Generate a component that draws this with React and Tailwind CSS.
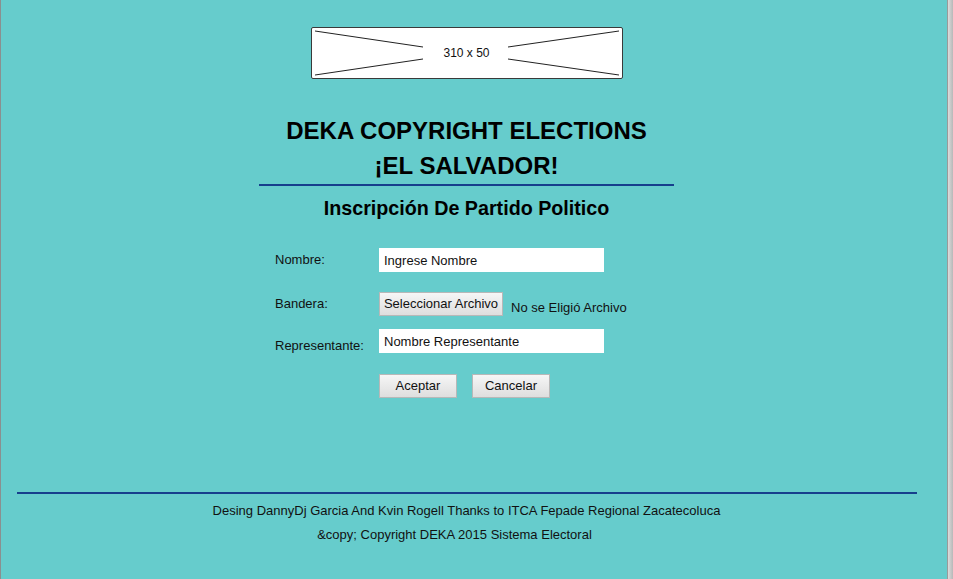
export default function App() {
  return (
    <div className="flex h-[579px] w-[953px] overflow-hidden bg-[#66cccc] font-['Liberation_Sans',Arial,sans-serif] text-[#111]">
      {/* left window edge */}
      <div className="w-px bg-[#8a8f8f]" />

      <main className="flex w-[931px] flex-col items-center">
        {/* banner placeholder */}
        <div className="relative mt-[27px] h-[52px] w-[312px] rounded-[2px] border border-[#3a3a3a] bg-white">
          <svg className="absolute inset-0" width="310" height="50" viewBox="0 0 310 50">
            <line x1="3" y1="3" x2="111" y2="19" stroke="#222" strokeWidth="1" />
            <line x1="3" y1="47" x2="111" y2="31" stroke="#222" strokeWidth="1" />
            <line x1="307" y1="3" x2="196" y2="19" stroke="#222" strokeWidth="1" />
            <line x1="307" y1="47" x2="196" y2="31" stroke="#222" strokeWidth="1" />
          </svg>
          <span className="absolute inset-0 flex items-center justify-center text-[12px]">310 x 50</span>
        </div>

        {/* titles */}
        <h1 className="mt-[34px] text-center text-[24px] font-bold leading-[35px] text-black">
          DEKA COPYRIGHT ELECTIONS
          <br />
          ¡EL SALVADOR!
        </h1>
        <div className="mt-px h-[2px] w-[415px] bg-[#163f8c]" />
        <h2 className="mt-[10px] text-[19.7px] font-bold leading-[24px] text-black">Inscripción De Partido Politico</h2>

        {/* form */}
        <form className="mt-[28px] flex w-full flex-col pl-[274px] text-[13px]">
          <div className="flex h-[24px] items-center">
            <label className="w-[104px]">Nombre:</label>
            <input
              defaultValue="Ingrese Nombre"
              className="h-[24px] w-[225px] border border-white bg-white px-[4px] text-[13px] outline-none"
            />
          </div>

          <div className="mt-[20px] flex h-[24px] items-center">
            <label className="w-[104px]">Bandera:</label>
            <button
              type="button"
              className="h-[24px] w-[124px] border border-[#b8b8b8] bg-gradient-to-b from-[#f6f6f6] to-[#dedede] text-[13px]"
            >
              Seleccionar Archivo
            </button>
            <span className="ml-[8px] mt-[8px]">No se Eligió Archivo</span>
          </div>

          <div className="mt-[13px] flex h-[24px] items-center">
            <label className="mt-[10px] w-[104px]">Representante:</label>
            <input
              defaultValue="Nombre Representante"
              className="h-[24px] w-[225px] border border-white bg-white px-[4px] text-[13px] outline-none"
            />
          </div>

          <div className="mt-[21px] flex h-[24px] items-center gap-[15px] pl-[104px]">
            <button
              type="button"
              className="h-[24px] w-[78px] border border-[#b8b8b8] bg-gradient-to-b from-[#f6f6f6] to-[#dedede] text-[13px]"
            >
              Aceptar
            </button>
            <button
              type="button"
              className="h-[24px] w-[78px] border border-[#b8b8b8] bg-gradient-to-b from-[#f6f6f6] to-[#dedede] text-[13px]"
            >
              Cancelar
            </button>
          </div>
        </form>

        {/* footer */}
        <footer className="mt-[94px] flex w-full flex-col items-center">
          <div className="h-[2px] w-[900px] bg-[#163f8c]" />
          <p className="mt-[8px] text-[13px] leading-[18px]">
            Desing DannyDj Garcia And Kvin Rogell Thanks to ITCA Fepade Regional Zacatecoluca
          </p>
          <p className="mt-[6px] pr-[24px] text-[13px] leading-[18px]">&amp;copy; Copyright DEKA 2015 Sistema Electoral</p>
        </footer>
      </main>

      <div className="flex-1" />
      {/* right window edge */}
      <div className="flex w-[6px]">
        <div className="w-px bg-[#9a9a9a]" />
        <div className="flex-1 bg-gradient-to-r from-[#dcdcdc] to-[#b8b8b8]" />
      </div>
    </div>
  );
}
